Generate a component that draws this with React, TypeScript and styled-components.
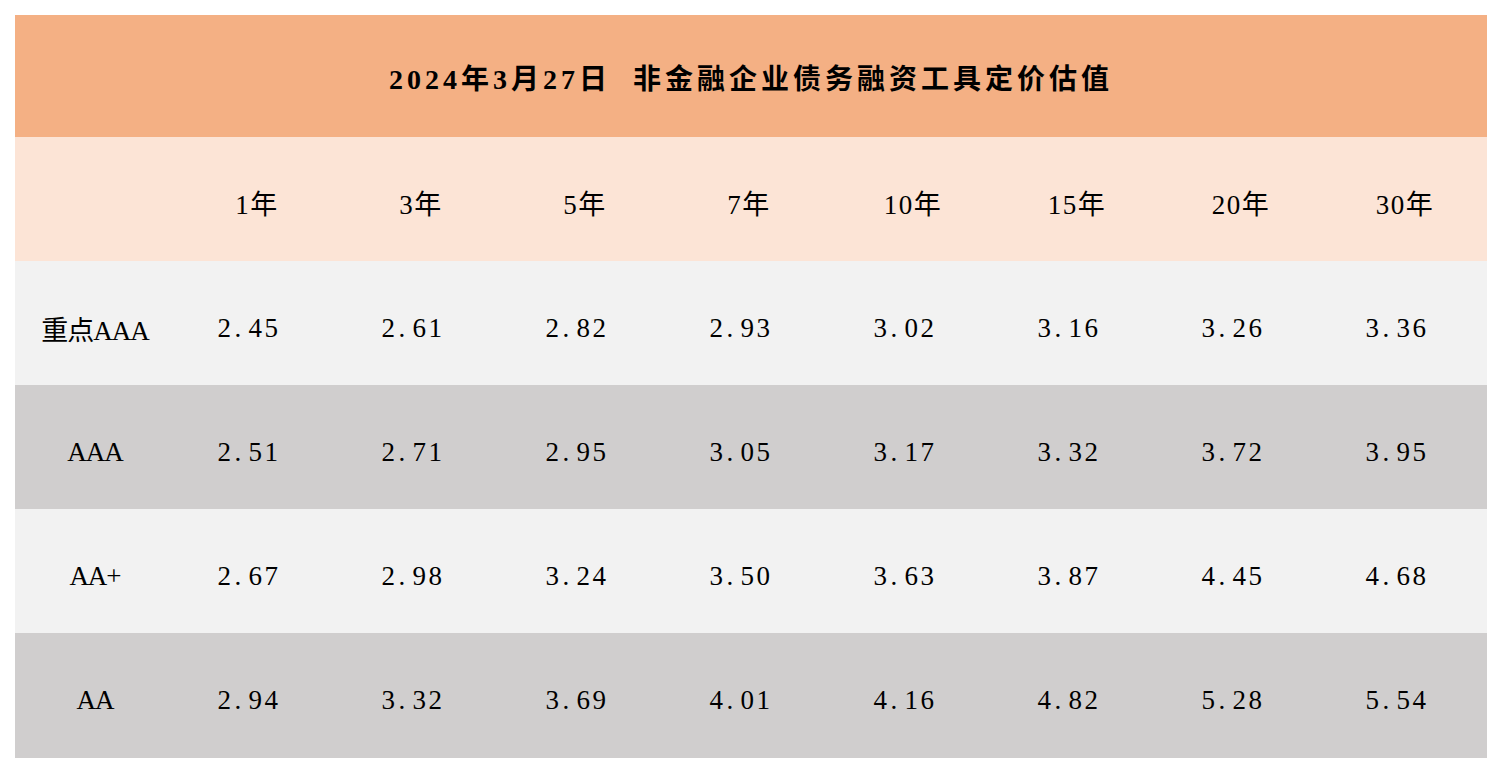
import styled, { createGlobalStyle } from "styled-components";

const GlobalStyle = createGlobalStyle`
  body {
    margin: 0;
    background: #ffffff;
    font-family: "Liberation Serif", "Noto Sans CJK SC", serif;
    color: #000000;
  }
`;

const terms = ["1年", "3年", "5年", "7年", "10年", "15年", "20年", "30年"];

const rows = [
  { name: "重点AAA", values: ["2.45", "2.61", "2.82", "2.93", "3.02", "3.16", "3.26", "3.36"] },
  { name: "AAA", values: ["2.51", "2.71", "2.95", "3.05", "3.17", "3.32", "3.72", "3.95"] },
  { name: "AA+", values: ["2.67", "2.98", "3.24", "3.50", "3.63", "3.87", "4.45", "4.68"] },
  { name: "AA", values: ["2.94", "3.32", "3.69", "4.01", "4.16", "4.82", "5.28", "5.54"] },
];

const App = () => {
  return (
    <Page>
      <GlobalStyle />
      <Table>
        <Title>2024年3月27日  非金融企业债务融资工具定价估值</Title>
        <HeadRow>
          <Label />
          {terms.map((t) => (
            <HeadCell key={t}>{t}</HeadCell>
          ))}
        </HeadRow>
        {rows.map((row, i) => (
          <Row key={row.name} $dark={i % 2 === 1} $last={i === rows.length - 1}>
            <Label>{row.name}</Label>
            {row.values.map((v, j) => (
              <ValueCell key={j}>
                {v.split(".")[0]}
                <Dot>.</Dot>
                {v.split(".")[1]}
              </ValueCell>
            ))}
          </Row>
        ))}
      </Table>
    </Page>
  );
};

export default App;

const Page = styled.div`
  padding: 15px;
`;

const Table = styled.div`
  width: 1472px;
  display: flex;
  flex-direction: column;
`;

const Title = styled.div`
  height: 122px;
  background-color: #f4b084;
  display: flex;
  align-items: center;
  justify-content: center;
  padding-top: 2px;
  box-sizing: border-box;
  font-size: 28px;
  font-weight: bold;
  letter-spacing: 4px;
  white-space: pre;
`;

const HeadRow = styled.div`
  height: 124px;
  background-color: #fce4d6;
  display: grid;
  grid-template-columns: 160px repeat(8, 164px);
  align-items: center;
  font-size: 27px;
  letter-spacing: 1.5px;
  padding-top: 6px;
  box-sizing: border-box;
`;

const Row = styled.div<{ $dark: boolean; $last: boolean }>`
  height: ${({ $last }) => ($last ? "125px" : "124px")};
  background-color: ${({ $dark }) => ($dark ? "#d0cece" : "#f2f2f2")};
  display: grid;
  grid-template-columns: 160px repeat(8, 164px);
  align-items: center;
  font-size: 27px;
  letter-spacing: 2.5px;
  padding-top: 10px;
  box-sizing: border-box;
`;

const Label = styled.div`
  text-align: center;
  letter-spacing: -1px;
`;

const HeadCell = styled.div`
  text-align: center;
`;

const ValueCell = styled.div`
  text-align: center;
  padding-right: 16px;
`;

const Dot = styled.span`
  display: inline-block;
  width: 14px;
  text-align: left;
  padding-left: 1px;
`;
